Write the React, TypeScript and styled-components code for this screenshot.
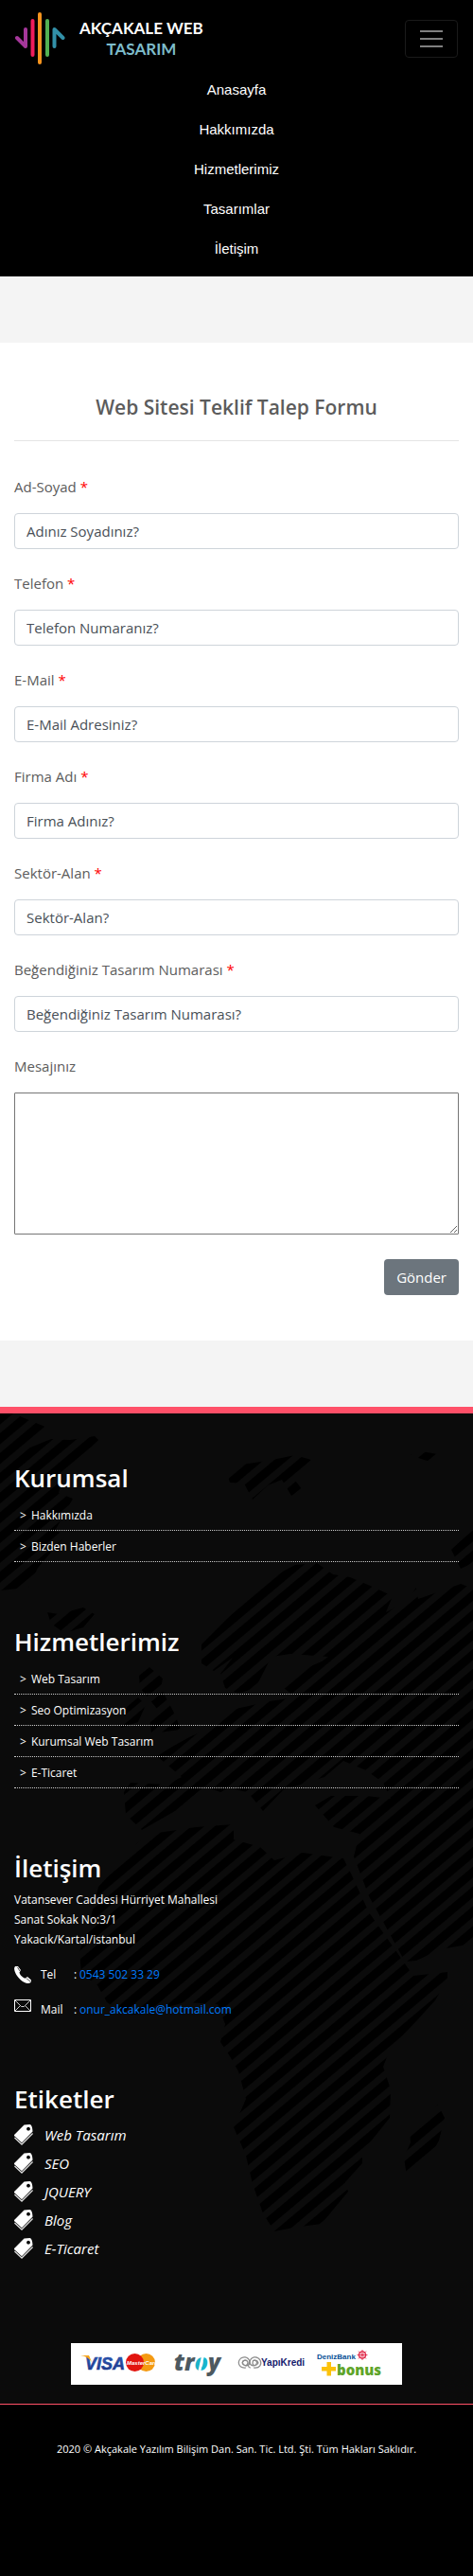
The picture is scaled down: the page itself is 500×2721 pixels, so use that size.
import React from "react";
import styled, { createGlobalStyle } from "styled-components";

const GlobalStyle = createGlobalStyle`
  *, *::before, *::after { box-sizing: border-box; }
  body {
    margin: 0;
    background: #f4f4f4;
    color: #5c5c5c;
    font-family: "Open Sans", "Noto Sans", sans-serif;
    font-size: 15px;
    line-height: 24px;
  }
  h1, h2, p, ul, address { margin: 0; padding: 0; font-style: normal; }
  ul { list-style: none; }
`;

/* ---------- header ---------- */

const Header = styled.header`
  background: #000;
  padding: 8px 16px;
`;

const HeaderBar = styled.div`
  display: flex;
  align-items: center;
  justify-content: space-between;
  height: 66px;
`;

const Brand = styled.a`
  display: flex;
  align-items: center;
  gap: 15px;
  text-decoration: none;
`;

const BrandName = styled.span`
  display: flex;
  flex-direction: column;
  align-items: center;
  font: 700 17px/22px Lato, sans-serif;
  color: #fff;
`;

const BrandAccent = styled.span`
  color: #7dbccb;
`;

const Toggler = styled.button`
  display: flex;
  align-items: center;
  justify-content: center;
  width: 56px;
  height: 40px;
  padding: 0;
  background: transparent;
  border: 1px solid #1a1a1a;
  border-radius: 4px;
`;

const NavList = styled.ul`
  display: flex;
  flex-direction: column;
`;

const NavLink = styled.a`
  display: block;
  padding: 9px 0;
  text-align: center;
  text-decoration: none;
  color: #fff;
  font: 15px/24px "Liberation Sans", Arial, sans-serif;
`;

/* ---------- form ---------- */

const Main = styled.main`
  margin: 70px 0;
  padding: 48px 15px;
  background: #fff;
`;

const FormTitle = styled.h1`
  padding: 6px 0 20px;
  border-bottom: 1px solid #e5e5e5;
  margin-bottom: 36px;
  text-align: center;
  font-size: 21px;
  line-height: 29px;
  font-weight: 600;
`;

const Form = styled.form`
  display: flex;
  flex-direction: column;
  gap: 24px;
`;

const Field = styled.div`
  display: flex;
  flex-direction: column;
  gap: 16px;
`;

const Label = styled.label`
  line-height: 24px;
`;

const Required = styled.span`
  color: #f00;
`;

const Input = styled.input`
  width: 100%;
  height: 38px;
  padding: 6px 12px;
  border: 1px solid #ced4da;
  border-radius: 4px;
  background: #fff;
  color: #495057;
  font: inherit;
  &::placeholder { color: #495057; opacity: 1; }
`;

const Message = styled.textarea`
  width: 100%;
  height: 150px;
  padding: 2px;
  border: 1px solid #767676;
  border-radius: 1px;
  background: #fff;
  font: inherit;
  resize: vertical;
`;

const Submit = styled.button`
  align-self: flex-end;
  height: 38px;
  margin-top: 2px;
  padding: 0 13px;
  border: 0;
  border-radius: 4px;
  background: #6c757d;
  color: #fff;
  font: inherit;
`;

/* ---------- footer ---------- */

const Footer = styled.footer`
  position: relative;
  border-top: 7px solid #ff5068;
  background: #0b0b0b;
  color: #fff;
  font-size: 12px;
  line-height: 21px;
`;

const MapBackdrop = styled.svg`
  position: absolute;
  top: 0;
  left: 0;
  width: 100%;
  height: 1046px;
`;

const FooterBody = styled.div`
  position: relative;
  display: flex;
  flex-direction: column;
  gap: 65px;
  padding: 49px 15px 20px;
`;

const SectionTitle = styled.h2`
  margin-bottom: 4px;
  font-size: 26px;
  line-height: 38px;
  font-weight: 600;
`;

const LinkItem = styled.li`
  border-bottom: 1px dotted #ccc;
`;

const FooterLink = styled.a`
  display: flex;
  gap: 5px;
  padding: 6px 6px 5px;
  color: #fff;
  text-decoration: none;
`;

const ContactRow = styled.div`
  display: grid;
  grid-template-columns: 28px 35px 6px 1fr;
  align-items: center;
  height: 21px;
  margin-top: 16px;
`;

const ContactLink = styled.a`
  color: #007bff;
  text-decoration: none;
`;

const TagItem = styled.li`
  display: flex;
  align-items: center;
  gap: 12px;
  height: 30px;
  font-size: 15px;
  font-style: italic;
`;

const TagLink = styled.a`
  color: #fff;
  text-decoration: none;
`;

const Payments = styled.svg`
  display: block;
  width: 350px;
  max-width: 100%;
  height: 44px;
  margin: 20px auto 0;
  background: #fff;
`;

const Copyright = styled.div`
  position: relative;
  padding: 36px 15px 124px;
  border-top: 1px solid #ff5068;
  background: #000;
  text-align: center;
  font-size: 11px;
`;

const NAV = ["Anasayfa", "Hakkımızda", "Hizmetlerimiz", "Tasarımlar", "İletişim"];

const FIELDS = [
  { id: "name", label: "Ad-Soyad", hint: "Adınız Soyadınız?", type: "text" },
  { id: "phone", label: "Telefon", hint: "Telefon Numaranız?", type: "tel" },
  { id: "email", label: "E-Mail", hint: "E-Mail Adresiniz?", type: "email" },
  { id: "company", label: "Firma Adı", hint: "Firma Adınız?", type: "text" },
  { id: "sector", label: "Sektör-Alan", hint: "Sektör-Alan?", type: "text" },
  { id: "design", label: "Beğendiğiniz Tasarım Numarası", hint: "Beğendiğiniz Tasarım Numarası?", type: "text" },
];

const LINK_GROUPS = [
  { title: "Kurumsal", links: ["Hakkımızda", "Bizden Haberler"] },
  { title: "Hizmetlerimiz", links: ["Web Tasarım", "Seo Optimizasyon", "Kurumsal Web Tasarım", "E-Ticaret"] },
];

const TAGS = ["Web Tasarım", "SEO", "JQUERY", "Blog", "E-Ticaret"];

const LAND = [
  // Greenland
  "M0 0L14 0L50 15L34 27L32 36L54 27L74 28L100 24L104 28L67 67L62 84L77 90L58 124L70 128L40 163L30 184L0 187Z",
  // Iceland
  "M50 210L62 212L88 205L100 212L88 226L68 232L54 222Z",
  // Svalbard
  "M240 64L255 54L283 50L312 44L329 49L310 68L319 80L308 87L298 70L283 76L267 91L258 74L243 73Z",
  "M434 44L445 40L463 43L455 51L445 48Z",
  "M477 144L500 122L500 158L487 164Z",
  // Britain and Ireland
  "M147 277L158 268L172 280L170 290L185 318L191 334L160 338L158 322L166 312L148 290Z",
  "M134 310L146 300L154 308L146 326L128 332Z",
  // Europe, Asia and Arabia
  "M250 207L270 187L293 170L312 160L335 158L352 170L370 173L396 184L415 193L408 210L428 200L440 184L442 196L465 188L487 180L500 185L500 560L466 566L440 578L428 579L405 537L390 510L374 468L380 444L353 437L333 414L350 404L387 404L413 407L405 390L387 377L363 367L343 384L318 392L300 397L278 420L262 400L247 397L233 400L216 394L185 420L150 440L133 424L131 400L138 390L176 392L192 384L166 362L182 352L200 342L233 327L240 314L285 304L312 300L300 290L312 274L340 262L347 257L307 254L287 257L270 290L252 296L238 290L233 275L246 258L226 272L213 264L213 244Z",
  // Africa
  "M128 474L145 454L160 444L207 437L247 434L247 450L275 458L290 472L320 464L363 470L372 488L390 527L437 594L473 590L473 598L460 620L440 642L413 670L405 690L413 714L412 744L383 780L383 792L365 812L368 822L353 840L340 856L310 860L290 864L278 845L267 814L260 784L247 754L260 724L252 695L243 679L233 664L238 645L230 624L195 622L160 632L135 636L113 622L103 604L86 592L84 568L95 536L104 500Z",
  // Madagascar
  "M433 757L448 748L463 730L470 744L464 768L454 786L430 806L427 786L434 770Z",
];

const LogoMark = () => (
  <svg width="53" height="58" viewBox="0 0 53 58" fill="none" strokeWidth="4" strokeLinecap="round" strokeLinejoin="round" aria-hidden="true">
    <path d="M11 19V37L2 28" stroke="#a5379a" />
    <path d="M18.500 10V46" stroke="#ee1c5c" />
    <path d="M26 3V54" stroke="#f7941e" />
    <path d="M34 10V46" stroke="#53b153" />
    <path d="M41.500 37V19L50.500 28" stroke="#3290a8" />
  </svg>
);

const PhoneIcon = () => (
  <svg width="18" height="18" viewBox="0 0 18 18" fill="#fff" aria-hidden="true">
    <path d="M1 0L4 0L7 4L5.500 6.500C6 9 9 12 11.500 12.700L14 11L18 14.500L17.500 17C15 18.800 11 18 7 14.500C2.500 10.500 -.5 5 .2 1.500Z" />
    <path d="M3.500 1L6 5M12.800 12.600L17 16" stroke="#0b0b0b" strokeWidth=".7" />
  </svg>
);

const MailIcon = () => (
  <svg width="18" height="21" viewBox="0 0 18 21" fill="none" stroke="#fff" aria-hidden="true">
    <path d="M.5 .5H17.500V12.500H.5Z" />
    <path d="M1 1L7.500 7.500H10.500L17 1M1 12L6.500 6.500M17 12L11.500 6.500" stroke="#ccc" />
  </svg>
);

const TagIcon = () => (
  <svg width="20" height="22" viewBox="0 0 20 22" aria-hidden="true">
    <path fill="#fff" fillRule="evenodd" d="M10.500 .6L16.500 0C18 0 19.500 3 19.500 7.500L8 19.300L0 12Q-.2 11 .8 10.200ZM15 2.800a1.900 1.900 0 1 0 .01 0Z" />
    <path d="M.4 14L8 21L19.600 9.500" fill="none" stroke="#ddd" strokeWidth="1.300" />
  </svg>
);

const WorldMap = () => (
  <MapBackdrop viewBox="0 0 500 1046" preserveAspectRatio="xMidYMin slice" aria-hidden="true">
    <defs>
      <pattern id="stripes" width="16" height="16" patternUnits="userSpaceOnUse" patternTransform="rotate(-40)">
        <rect width="16" height="9" fill="#000" />
      </pattern>
    </defs>
    {LAND.map((d) => (
      <path key={d} d={d} fill="url(#stripes)" />
    ))}
  </MapBackdrop>
);

const PaymentLogos = () => (
  <Payments viewBox="0 0 350 44" role="img" aria-label="Ödeme seçenekleri">
    <defs>
      <linearGradient id="visa" x1="0" y1="0" x2="0" y2="1">
        <stop offset="0" stopColor="#2d5cb8" />
        <stop offset="1" stopColor="#1c2f7c" />
      </linearGradient>
    </defs>
    <text x="15" y="28" fontFamily="Liberation Sans" fontWeight="700" fontStyle="italic" fontSize="18" fill="url(#visa)" stroke="#2448a0" strokeWidth=".6">VISA</text>
    <path d="M10 13H19L22 20Q18 14 10 13Z" fill="#f6a51c" />
    <circle cx="79.500" cy="20.500" r="9.500" fill="#f49a12" />
    <circle cx="67.500" cy="20.500" r="9.500" fill="#e2150f" />
    <text x="59" y="23" fontFamily="Liberation Sans" fontWeight="700" fontStyle="italic" fontSize="6" fill="#fff">MasterCard</text>
    <text x="109" y="29" fontFamily="Open Sans" fontWeight="800" fontStyle="italic" fontSize="24" fill="#4d5960">
      tr<tspan fill="#19b5cc">o</tspan>y
    </text>
    <path d="M138 14L141 13L137 31L134 31Z" fill="#fff" />
    <g fill="none" stroke="#8b8b8b" strokeWidth="1.200">
      <path d="M185 26C179 27 176 22 178 18C181 13 188 14 189 20C189 24 184 25 182 22C180 19 184 17 186 19M189 18C188 22 186 26 190 26" />
      <path d="M193 26C200 27 202 22 200 18C197 13 190 14 189 20C189 24 194 25 196 22C198 19 194 17 192 19" />
      <path d="M181 21C182 17 187 17 187 21C186 25 182 24 181 21M192 21C192 17 197 17 198 21C196 25 192 24 192 21" />
    </g>
    <text x="201" y="24" fontFamily="Liberation Sans" fontWeight="700" fontSize="10" fill="#14206c">YapıKredi</text>
    <text x="260" y="17" fontFamily="Liberation Sans" fontWeight="700" fontSize="8" fill="#075096">DenizBank</text>
    <g fill="none" stroke="#df2344">
      <circle cx="308" cy="12.500" r="3.600" strokeWidth="1.400" />
      <path d="M308 7V18M302.500 12.500H313.500M304 8.500L312 16.500M312 8.500L304 16.500" strokeWidth=".8" />
    </g>
    <path d="M270.500 20H275V25H280V29.500H275V34.500H270.500V29.500H265V25H270.500Z" fill="#fcc20b" />
    <text x="281" y="34" fontFamily="Open Sans" fontWeight="800" fontSize="15" fill="#5ea42a">bonus</text>
  </Payments>
);

export default function App() {
  return (
    <>
      <GlobalStyle />
      <Header>
        <HeaderBar>
          <Brand href="#">
            <LogoMark />
            <BrandName>
              AKÇAKALE WEB
              <BrandAccent>TASARIM</BrandAccent>
            </BrandName>
          </Brand>
          <Toggler type="button" aria-label="Menü">
            <svg width="24" height="18" viewBox="0 0 24 18" stroke="#808080" strokeWidth="2" aria-hidden="true">
              <path d="M0 1H24M0 9H24M0 17H24" />
            </svg>
          </Toggler>
        </HeaderBar>
        <nav>
          <NavList>
            {NAV.map((item) => (
              <li key={item}>
                <NavLink href="#">{item}</NavLink>
              </li>
            ))}
          </NavList>
        </nav>
      </Header>

      <Main>
        <FormTitle>Web Sitesi Teklif Talep Formu</FormTitle>
        <Form>
          {FIELDS.map((f) => (
            <Field key={f.id}>
              <Label htmlFor={f.id}>
                {f.label} <Required>*</Required>
              </Label>
              <Input id={f.id} type={f.type} placeholder={f.hint} />
            </Field>
          ))}
          <Field>
            <Label htmlFor="message">Mesajınız</Label>
            <Message id="message" />
          </Field>
          <Submit type="submit">Gönder</Submit>
        </Form>
      </Main>

      <Footer>
        <WorldMap />
        <FooterBody>
          {LINK_GROUPS.map((group) => (
            <section key={group.title}>
              <SectionTitle>{group.title}</SectionTitle>
              <ul>
                {group.links.map((link) => (
                  <LinkItem key={link}>
                    <FooterLink href="#">
                      <span>&gt;</span>
                      <span>{link}</span>
                    </FooterLink>
                  </LinkItem>
                ))}
              </ul>
            </section>
          ))}
          <section>
            <SectionTitle>İletişim</SectionTitle>
            <address>
              Vatansever Caddesi Hürriyet Mahallesi
              <br />
              Sanat Sokak No:3/1
              <br />
              Yakacık/Kartal/istanbul
              <ContactRow>
                <PhoneIcon />
                <span>Tel</span>
                <span>:</span>
                <ContactLink href="tel:05435023329">0543 502 33 29</ContactLink>
              </ContactRow>
              <ContactRow>
                <MailIcon />
                <span>Mail</span>
                <span>:</span>
                <ContactLink href="mailto:onur_akcakale@hotmail.com">onur_akcakale@hotmail.com</ContactLink>
              </ContactRow>
            </address>
          </section>
          <section>
            <SectionTitle>Etiketler</SectionTitle>
            <ul>
              {TAGS.map((tag) => (
                <TagItem key={tag}>
                  <TagIcon />
                  <TagLink href="#">{tag}</TagLink>
                </TagItem>
              ))}
            </ul>
          </section>
          <PaymentLogos />
        </FooterBody>
        <Copyright>2020 © Akçakale Yazılım Bilişim Dan. San. Tic. Ltd. Şti. Tüm Hakları Saklıdır.</Copyright>
      </Footer>
    </>
  );
}
